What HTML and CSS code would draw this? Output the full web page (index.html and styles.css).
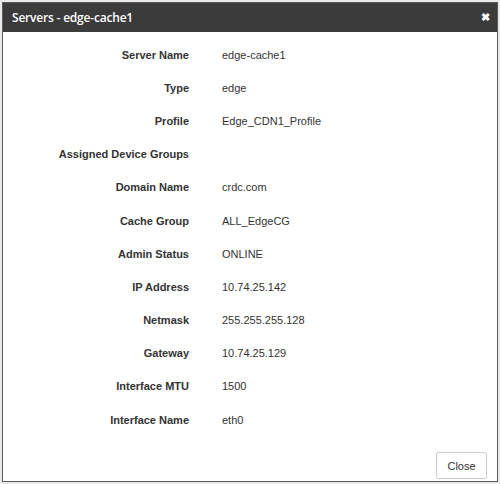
FILE: index.html
```html
<!DOCTYPE html>
<html>
<head lang="en">
    <meta charset="UTF-8">
    <title>Servers - edge-cache1</title>
    <link rel="stylesheet" href="styles.css">
</head>
<body>
<div class="dialog">
    <div class="dialog-head">
        <span class="dialog-title">Servers - edge-cache1</span>
        <span class="dialog-close">&#10006;</span>
    </div>
    <div class="dialog-body">
        <div class="field-label">Server Name</div><div class="field-value">edge-cache1</div>
        <div class="field-label">Type</div><div class="field-value">edge</div>
        <div class="field-label">Profile</div><div class="field-value">Edge_CDN1_Profile</div>
        <div class="field-label">Assigned Device Groups</div><div class="field-value"></div>
        <div class="field-label">Domain Name</div><div class="field-value">crdc.com</div>
        <div class="field-label">Cache Group</div><div class="field-value">ALL_EdgeCG</div>
        <div class="field-label">Admin Status</div><div class="field-value">ONLINE</div>
        <div class="field-label">IP Address</div><div class="field-value">10.74.25.142</div>
        <div class="field-label">Netmask</div><div class="field-value">255.255.255.128</div>
        <div class="field-label">Gateway</div><div class="field-value">10.74.25.129</div>
        <div class="field-label">Interface MTU</div><div class="field-value">1500</div>
        <div class="field-label">Interface Name</div><div class="field-value">eth0</div>
    </div>
    <div class="dialog-foot">
        <button class="btn">Close</button>
    </div>
</div>
</body>
</html>
```

FILE: styles.css
```css
* {
    margin: 0;
    padding: 0;
    box-sizing: border-box;
}
body {
    background: #e9e9e9;
    padding: 2px;
    font-family: "Liberation Sans", Arial, sans-serif;
    font-size: 11px;
    color: #333;
}
.dialog {
    width: 496px;
    height: 480px;
    background: #fff;
    border: 1px solid #5a5a5a;
    display: flex;
    flex-direction: column;
}
.dialog-head {
    height: 29px;
    background: #3b3b3b;
    color: #fff;
    display: flex;
    align-items: center;
    justify-content: space-between;
    padding: 0 7px 0 9px;
}
.dialog-title {
    font-family: "Open Sans", sans-serif;
    font-size: 12px;
    font-weight: 600;
    letter-spacing: -0.2px;
}
.dialog-close {
    font-size: 11px;
    font-weight: 700;
}
.dialog-body {
    display: grid;
    grid-template-columns: 186px 1fr;
    grid-auto-rows: 33.2px;
    column-gap: 33px;
    align-items: center;
    padding-top: 6px;
}
.field-label {
    text-align: right;
    font-weight: 700;
}
.dialog-foot {
    margin-top: auto;
    display: flex;
    justify-content: flex-end;
    padding: 0 10px 2px 0;
}
.btn {
    font-family: "Liberation Sans", Arial, sans-serif;
    font-size: 11px;
    color: #333;
    background: #fff;
    border: 1px solid #ccc;
    border-radius: 2px;
    width: 51px;
    height: 27px;
}
```
